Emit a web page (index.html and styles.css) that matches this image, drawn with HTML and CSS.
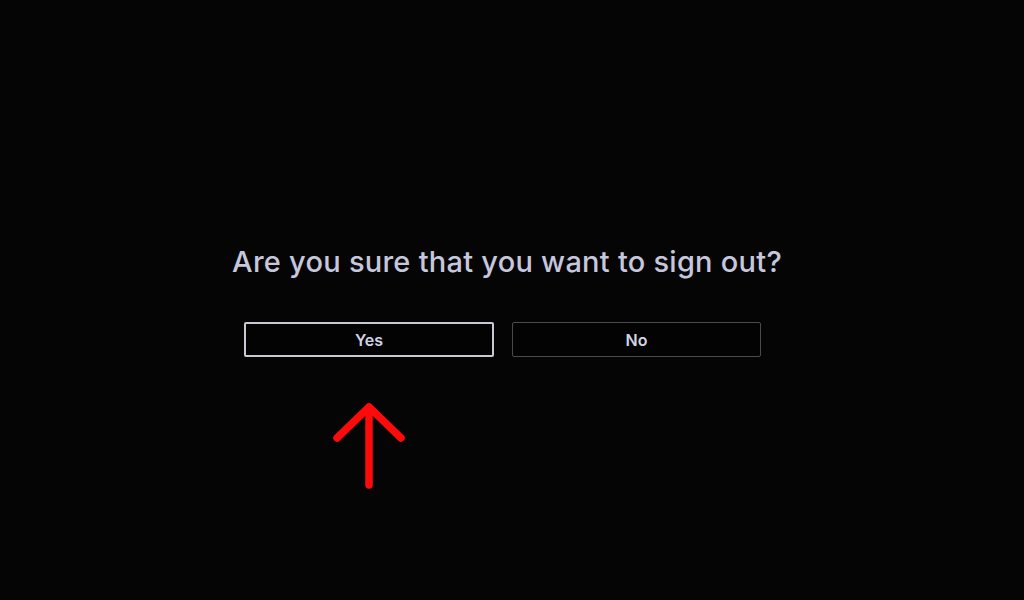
FILE: index.html
```html
<!DOCTYPE html>
<html>
<head>
<meta charset="utf-8">
<link rel="stylesheet" href="styles.css">
</head>
<body>
<main class="dialog">
  <h1 class="title">Are you sure that you want to sign out?</h1>
  <div class="buttons">
    <div class="col">
      <button class="btn btn-focus">Yes</button>
      <svg class="arrow" width="80" height="96" viewBox="0 0 80 96">
        <path d="M40 86 L40 8 M8 39 L40 8 L72 39" fill="none" stroke="#ff0a0a" stroke-width="7.5" stroke-linecap="round" stroke-linejoin="round"/>
      </svg>
    </div>
    <div class="col">
      <button class="btn">No</button>
    </div>
  </div>
</main>
</body>
</html>
```
FILE: styles.css
```css
html, body {
  margin: 0;
  padding: 0;
  background: #050505;
  width: 1024px;
  height: 600px;
  overflow: hidden;
}
.dialog {
  display: flex;
  flex-direction: column;
  padding-top: 243px;
  padding-left: 244px;
  width: 516px;
}
.title {
  margin: 0 0 0 5px;
  width: 516px;
  white-space: nowrap;
  display: flex;
  justify-content: center;
  font-family: Inter, "Liberation Sans", sans-serif;
  font-weight: 500;
  font-size: 29px;
  line-height: 38px;
  letter-spacing: 0.25px;
  color: #c6c7dd;
}
.buttons {
  display: flex;
  gap: 18px;
  margin-top: 41px;
}
.col {
  display: flex;
  flex-direction: column;
  align-items: center;
}
.btn {
  box-sizing: border-box;
  width: 249px;
  height: 35px;
  background: #030303;
  border: 1.5px solid #4a4a50;
  border-radius: 2px;
  color: #d2d3e6;
  font-family: Inter, "Liberation Sans", sans-serif;
  font-weight: 600;
  font-size: 16px;
  padding: 0;
}
.btn-focus {
  width: 250px;
  border: 2.5px solid #c9c9d6;
}
.arrow {
  margin-top: 42px;
}
```
